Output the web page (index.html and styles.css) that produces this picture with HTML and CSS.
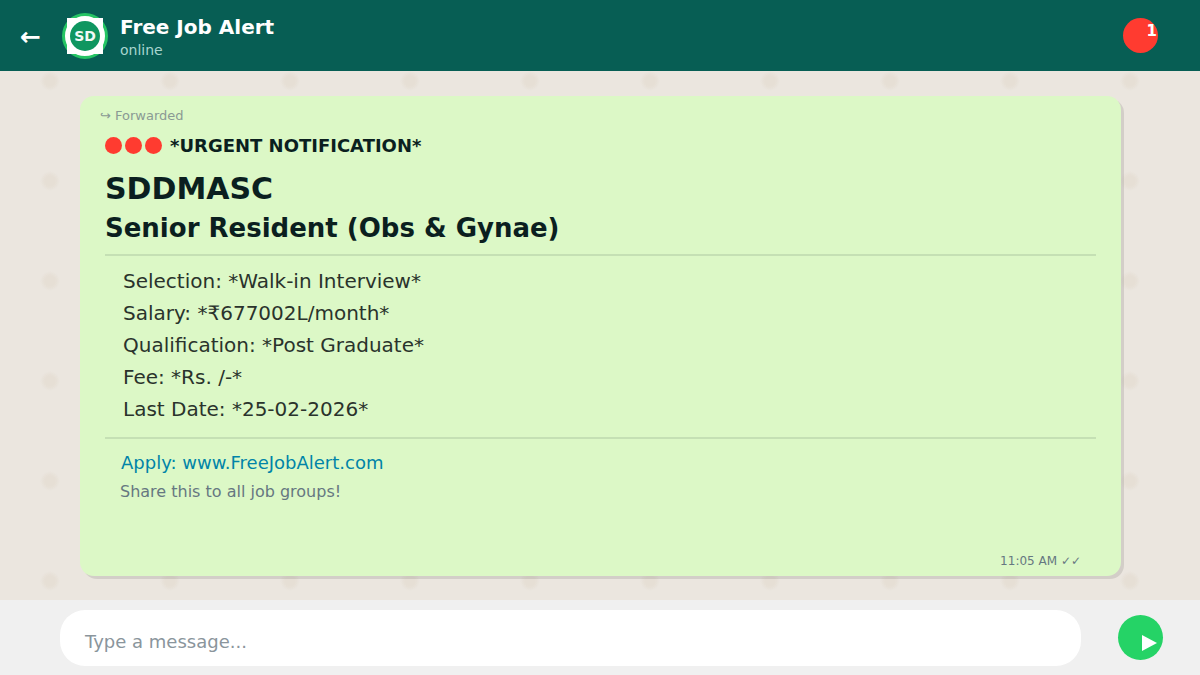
FILE: index.html
```html
<!DOCTYPE html>
<html lang="en">
<head>
<meta charset="utf-8">
<title>Free Job Alert</title>
<link rel="stylesheet" href="styles.css">
</head>
<body>
<div class="app">
  <header class="topbar">
    <span class="back">←</span>
    <div class="avatar"><div class="avatar-square"><div class="avatar-disc">SD</div></div></div>
    <div class="contact">
      <div class="contact-name">Free Job Alert</div>
      <div class="contact-status">online</div>
    </div>
    <div class="badge"><span class="badge-count">1</span></div>
  </header>
  <main class="chat">
    <article class="bubble">
      <div class="forwarded">↪ Forwarded</div>
      <div class="urgent">
        <span class="dots"><i class="dot"></i><i class="dot"></i><i class="dot"></i></span>
        <span>*URGENT NOTIFICATION*</span>
      </div>
      <h1 class="org">SDDMASC</h1>
      <h2 class="post">Senior Resident (Obs &amp; Gynae)</h2>
      <ul class="details">
        <li>Selection: *Walk-in Interview*</li>
        <li>Salary: *₹677002L/month*</li>
        <li>Qualification: *Post Graduate*</li>
        <li>Fee: *Rs. /-*</li>
        <li>Last Date: *25-02-2026*</li>
      </ul>
      <div class="apply">Apply: www.FreeJobAlert.com</div>
      <div class="share">Share this to all job groups!</div>
      <div class="time">11:05 AM ✓✓</div>
    </article>
  </main>
  <footer class="composer">
    <div class="input">Type a message...</div>
    <div class="send"><svg class="send-icon" width="15" height="16" viewBox="0 0 15 16"><path d="M0 0 L15 8 L0 16 Z" fill="#fff"/></svg></div>
  </footer>
</div>
</body>
</html>
```
FILE: styles.css
```css
* { box-sizing: border-box; margin: 0; padding: 0; }
html, body { width: 1200px; height: 675px; overflow: hidden; }
body { font-family: "DejaVu Sans", sans-serif; background: #ebe6df; }
.app { width: 1200px; height: 675px; display: flex; flex-direction: column; }

.topbar { height: 71px; flex: none; background: #075e54; display: flex; align-items: center; padding-left: 20px; position: relative; z-index: 1; }
.back { width: 42px; flex: none; margin-top: 2px; color: #fff; font-size: 25px; font-weight: 700; line-height: 1; }
.avatar { width: 46px; height: 46px; flex: none; border-radius: 50%; background: #fff; border: 3px solid #25c464; display: flex; align-items: center; justify-content: center; }
.avatar-square { width: 36px; height: 36px; flex: none; background: #fff; display: flex; align-items: center; justify-content: center; }
.avatar-disc { width: 30px; height: 30px; border-radius: 50%; background: #0f9660; color: #f2faf6; font-size: 14px; font-weight: 700; display: flex; align-items: center; justify-content: center; }
.contact { margin-left: 12px; display: flex; flex-direction: column; padding-top: 3px; }
.contact-name { color: #fff; font-size: 20px; font-weight: 700; line-height: 26px; }
.contact-status { color: #a8d5cf; font-size: 14px; line-height: 20px; }
.badge { position: absolute; left: 1123px; top: 18px; width: 35px; height: 35px; border-radius: 50%; background: #ff3b30; }
.badge-count { position: absolute; right: 1px; top: 4px; color: #fff; font-size: 15px; font-weight: 700; line-height: 18px; }

.chat { flex: 1; min-height: 0; padding: 25px 79px 0 80px; background-color: #ebe6df; background-image: radial-gradient(circle at 50px 10px, #e6dfd5 0, #e6dfd5 5px, rgba(230,223,213,0) 10px); background-size: 120px 100px; }
.bubble { height: 480px; background: #dcf8c6; border-radius: 14px; box-shadow: 3px 3px 0 rgba(0,0,0,.1); padding: 10px 25px 0 25px; position: relative; color: #0b1f1f; }
.forwarded { color: #8a9a94; font-size: 13px; line-height: 20px; margin-left: -5px; }
.urgent { margin-top: 9px; display: flex; align-items: center; gap: 8px; font-size: 18px; font-weight: 700; line-height: 22px; color: #0b1f1f; }
.dots { display: flex; gap: 3px; margin-bottom: 2px; }
.dot { width: 17px; height: 17px; border-radius: 50%; background: #ff3b30; display: block; }
.org { margin-top: 13px; font-size: 30px; font-weight: 700; line-height: 38px; color: #0b1f1f; }
.post { margin-top: 3px; font-size: 26px; font-weight: 700; line-height: 34px; color: #0b1f1f; }
.details { list-style: none; margin-top: 9px; padding: 9px 18px 12px; border-top: 2px solid #c5e0b4; border-bottom: 2px solid #c5e0b4; font-size: 20px; line-height: 32px; color: #2a332c; }
.apply { margin-top: 12px; margin-left: 16px; color: #0084a8; font-size: 18px; line-height: 24px; }
.share { margin-top: 5px; margin-left: 15px; color: #667781; font-size: 16px; line-height: 24px; }
.time { position: absolute; right: 40px; bottom: 7px; color: #667781; font-size: 12px; line-height: 16px; }

.composer { height: 75px; flex: none; background: #f0f0f0; display: flex; align-items: flex-start; padding: 10px 0 0 60px; }
.input { width: 1021px; height: 56px; background: #fff; border-radius: 25px; color: #8a959c; font-size: 18px; line-height: 64px; padding-left: 25px; }
.send { width: 45px; height: 45px; flex: none; margin: 5px 0 0 37px; border-radius: 50%; background: #25d366; display: flex; align-items: center; justify-content: center; }
.send-icon { margin: 11px 0 0 18px; }
```
